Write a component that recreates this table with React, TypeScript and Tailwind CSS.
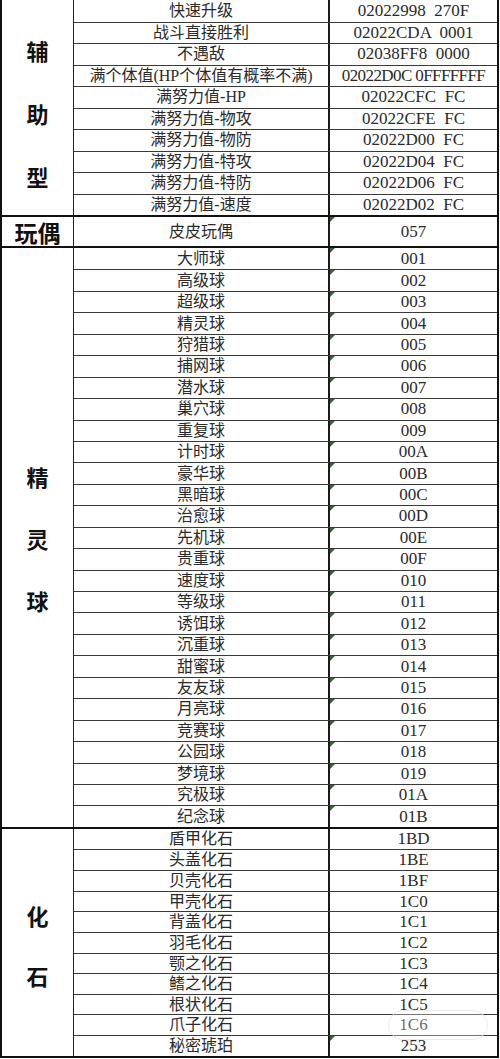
import React from "react";

type Row = [string, string];

const s1: Row[] = [
  ["快速升级", "02022998  270F"],
  ["战斗直接胜利", "02022CDA  0001"],
  ["不遇敌", "02038FF8  0000"],
  ["满个体值(HP个体值有概率不满)", "02022D0C 0FFFFFFF"],
  ["满努力值-HP", "02022CFC  FC"],
  ["满努力值-物攻", "02022CFE  FC"],
  ["满努力值-物防", "02022D00  FC"],
  ["满努力值-特攻", "02022D04  FC"],
  ["满努力值-特防", "02022D06  FC"],
  ["满努力值-速度", "02022D02  FC"],
];

const s3: Row[] = [
  ["大师球", "001"],
  ["高级球", "002"],
  ["超级球", "003"],
  ["精灵球", "004"],
  ["狩猎球", "005"],
  ["捕网球", "006"],
  ["潜水球", "007"],
  ["巢穴球", "008"],
  ["重复球", "009"],
  ["计时球", "00A"],
  ["豪华球", "00B"],
  ["黑暗球", "00C"],
  ["治愈球", "00D"],
  ["先机球", "00E"],
  ["贵重球", "00F"],
  ["速度球", "010"],
  ["等级球", "011"],
  ["诱饵球", "012"],
  ["沉重球", "013"],
  ["甜蜜球", "014"],
  ["友友球", "015"],
  ["月亮球", "016"],
  ["竞赛球", "017"],
  ["公园球", "018"],
  ["梦境球", "019"],
  ["究极球", "01A"],
  ["纪念球", "01B"],
];

const s4: Row[] = [
  ["盾甲化石", "1BD"],
  ["头盖化石", "1BE"],
  ["贝壳化石", "1BF"],
  ["甲壳化石", "1C0"],
  ["背盖化石", "1C1"],
  ["羽毛化石", "1C2"],
  ["颚之化石", "1C3"],
  ["鳍之化石", "1C4"],
  ["根状化石", "1C5"],
  ["爪子化石", "1C6"],
  ["秘密琥珀", "253"],
];

const cellFont = {
  fontFamily: '"Liberation Serif", "Noto Sans CJK SC", serif',
};
const headFont = {
  fontFamily: '"Noto Sans CJK SC", sans-serif',
};

function Tick() {
  return (
    <span className="absolute left-0 top-0 h-0 w-0 border-t-[5px] border-r-[5px] border-t-[#3f5f3f] border-r-transparent" />
  );
}

function DataRow({
  row,
  first,
  h,
  tick,
}: {
  row: Row;
  first: boolean;
  h: string;
  tick: boolean;
}) {
  const long = row[1].length > 16;
  return (
    <div
      className={`grid grid-cols-[256px_1fr] ${h} ${first ? "" : "border-t border-[#3a3a3a]"}`}
    >
      <div
        className="flex items-center justify-center border-r-2 border-[#1a1a1a] text-[16px] leading-[20px] text-[#2a2a2a] whitespace-pre"
        style={cellFont}
      >
        {row[0]}
      </div>
      <div
        className={`relative flex items-center justify-center text-[17px] leading-[20px] text-[#2a2a2a] whitespace-pre ${long ? "tracking-[-0.6px]" : ""}`}
        style={cellFont}
      >
        {tick && <Tick />}
        {row[1]}
      </div>
    </div>
  );
}

function Section({
  label,
  rows,
  h,
  tick,
  labelClass,
}: {
  label: React.ReactNode;
  rows: Row[];
  h: string;
  tick: (i: number) => boolean;
  labelClass: string;
}) {
  return (
    <div className="flex border-b-2 border-[#111]">
      <div
        className={`flex w-[72px] shrink-0 items-center justify-center border-r border-[#222] text-[#111] ${labelClass}`}
        style={headFont}
      >
        {label}
      </div>
      <div className="flex flex-1 flex-col">
        {rows.map((r, i) => (
          <DataRow key={i} row={r} first={i === 0} h={h} tick={tick(i)} />
        ))}
      </div>
    </div>
  );
}

function Vertical({ chars, lead }: { chars: string[]; lead: string }) {
  return (
    <div className="flex flex-col items-center">
      {chars.map((c, i) => (
        <span key={i} className={lead}>
          {c}
        </span>
      ))}
    </div>
  );
}

export default function App() {
  return (
    <div className="relative h-[1059px] w-[500px] overflow-hidden bg-white">
      <div className="w-[499px] border-l-2 border-r-2 border-[#111]">
        <Section
          label={<Vertical chars={["辅", "助", "型"]} lead="leading-[63px]" />}
          rows={s1}
          h="h-[21.5px]"
          tick={() => false}
          labelClass="pt-[12px] text-[22px] font-bold"
        />
        <Section
          label={<span className="leading-[26px]">玩偶</span>}
          rows={[["皮皮玩偶", "057"]]}
          h="h-[29px]"
          tick={() => true}
          labelClass="text-[23px] font-bold"
        />
        <Section
          label={<Vertical chars={["精", "灵", "球"]} lead="leading-[62px]" />}
          rows={s3}
          h="h-[21.45px]"
          tick={() => true}
          labelClass="pt-[2px] text-[22px] font-bold"
        />
        <Section
          label={<Vertical chars={["化", "石"]} lead="leading-[60px]" />}
          rows={s4}
          h="h-[20.64px]"
          tick={(i) => i === 10}
          labelClass="pt-[5px] text-[22px] font-bold"
        />
      </div>
      <div className="pointer-events-none absolute left-[388px] top-[1010px] h-[30px] w-[100px] rounded-full border border-[#ececec] bg-white/30" />
    </div>
  );
}
